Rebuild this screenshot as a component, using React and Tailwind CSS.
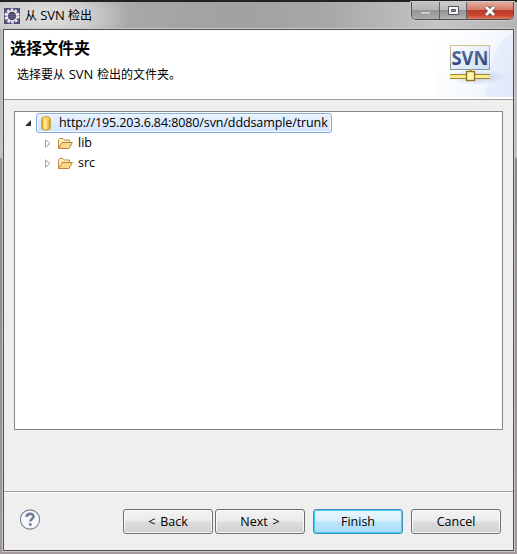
import React from "react";

const FONT = "font-['Open_Sans','Noto_Sans_CJK_SC',sans-serif]";

function AppIcon() {
  return (
    <svg width="16" height="16" viewBox="0 0 16 16" className="shrink-0">
      <rect width="16" height="16" fill="#57507f" />
      <circle cx="8" cy="8" r="6.4" fill="none" stroke="#f1eef2" strokeWidth="2.2" strokeDasharray="2.5 1.52" />
      <circle cx="8" cy="8" r="5" fill="#48446c" stroke="#f1eef2" strokeWidth="1.5" />
      <path d="M4 6.5h8M3.8 8.2h8.4M4.2 9.9h7.6" stroke="#77779a" strokeWidth=".7" />
    </svg>
  );
}

function SvnBanner() {
  return (
    <svg width="76" height="67" viewBox="0 0 76 67" className="shrink-0">
      <defs>
        <linearGradient id="bg" x1="0" x2="1" y1="0" y2=".4">
          <stop offset="0" stopColor="#fff" />
          <stop offset=".5" stopColor="#f9fbfe" />
          <stop offset="1" stopColor="#edf2fc" />
        </linearGradient>
        <linearGradient id="corner" x1="0" x2="1" y1="0" y2="1">
          <stop offset="0" stopColor="#edf2fc" />
          <stop offset="1" stopColor="#dbe5f8" />
        </linearGradient>
        <linearGradient id="frame" x1="0" x2="0" y1="0" y2="1">
          <stop offset="0" stopColor="#d6c08d" />
          <stop offset="1" stopColor="#7d9a9c" />
        </linearGradient>
        <linearGradient id="fill" x1="0" x2="1" y1="0" y2="1">
          <stop offset="0" stopColor="#fff" />
          <stop offset="1" stopColor="#cfddf4" />
        </linearGradient>
        <linearGradient id="word" x1="0" x2="0" y1="0" y2="1">
          <stop offset="0" stopColor="#6a7ea5" />
          <stop offset="1" stopColor="#1f3573" />
        </linearGradient>
        <radialGradient id="shade">
          <stop offset="0" stopColor="#9aa9ca" stopOpacity=".75" />
          <stop offset="1" stopColor="#c9d5ec" stopOpacity="0" />
        </radialGradient>
      </defs>
      <rect width="76" height="67" fill="url(#bg)" />
      <path d="M76 2C64 9 57 20 54 36L48 67H76Z" fill="url(#corner)" opacity=".8" />
      <ellipse cx="40" cy="47" rx="31" ry="8" fill="url(#shade)" />
      <rect x="13.5" y="15.5" width="39" height="24" fill="url(#fill)" stroke="url(#frame)" />
      <text x="14.5" y="35" textLength="37" lengthAdjust="spacingAndGlyphs" fontSize="19.5" fontWeight="700" fill="url(#word)" className="font-['Open_Sans',sans-serif]">SVN</text>
      <path d="M33.5 39v4" stroke="#c3a63e" strokeWidth="3" />
      <path d="M13 44.5h40M13 48.5h40" stroke="#a08936" />
      <path d="M13 46.5h40" stroke="#f9ec87" strokeWidth="3" />
      <rect x="29.5" y="41.5" width="8" height="9" fill="#fff6b8" stroke="#8e7622" strokeWidth="1.4" />
    </svg>
  );
}

function Folder() {
  return (
    <svg width="16" height="14" viewBox="0 0 16 14" className="shrink-0">
      <path d="M1.5 12.5V3.5L2.5 2.5H6L7.2 4H12.5V6" fill="#fdf0bd" stroke="#c08b45" />
      <path d="M1.5 12.5L5 6.5H15.3L12 12.5Z" fill="#fbd98c" stroke="#bf8239" strokeLinejoin="round" />
    </svg>
  );
}

function Database() {
  return (
    <svg width="10" height="15" viewBox="0 0 10 15" className="shrink-0">
      <defs>
        <linearGradient id="db">
          <stop offset="0" stopColor="#e5a51e" />
          <stop offset=".4" stopColor="#fff3a0" />
          <stop offset="1" stopColor="#dc9b16" />
        </linearGradient>
      </defs>
      <path d="M.8 2.5C.8.2 9.2.2 9.2 2.5V12.3C9.2 14.6.8 14.6.8 12.3Z" fill="url(#db)" stroke="#c58d20" />
      <ellipse cx="5" cy="2.6" rx="3.6" ry="1.2" fill="#fbdc68" />
    </svg>
  );
}

function TreeItem({ label }) {
  return (
    <div className="flex h-5 items-center pl-[30px]">
      <svg width="6" height="9" viewBox="0 0 6 9" className="shrink-0">
        <path d="M.5.8V8.2L5 4.5Z" fill="#fff" stroke="#a0a0a0" />
      </svg>
      <span className="ml-[6px] flex"><Folder /></span>
      <span className="ml-[5px] text-[12.5px] leading-5">{label}</span>
    </div>
  );
}

function Button({ children, primary = false, className = "" }) {
  const look = primary
    ? "border-[#3c8fb5] bg-[linear-gradient(#e9f6fd_0%,#d9f0fc_48%,#bce5fc_52%,#a9dbf5_100%)] shadow-[inset_0_0_0_1px_#48d0f5]"
    : "border-[#707070] bg-[linear-gradient(#f3f3f3_0%,#ebebeb_48%,#dddddd_52%,#cfcfcf_100%)] shadow-[inset_0_0_0_1px_#f8f8f8]";
  return (
    <button className={`flex h-[25px] w-[90px] items-center justify-center rounded-[3px] border pt-px text-[12.5px] leading-none [word-spacing:1.5px] ${look} ${className}`}>
      {children}
    </button>
  );
}

function WindowControls() {
  return (
    <div className="mr-[3px] flex h-[18px] w-[103px] self-start overflow-hidden rounded-b-[5px] border border-t-0 border-[#4e4e4e] shadow-[0_0_0_1px_#c9c9c9]">
      <div className="flex w-[28px] items-center justify-center border-r border-[#626262] bg-[linear-gradient(#c4c4c4_0%,#b4b4b4_45%,#959595_50%,#aaaaaa_100%)]">
        <span className="mt-[5px] h-[4px] w-[11px] border border-[#999] bg-[#cacaca]" />
      </div>
      <div className="flex w-[27px] items-center justify-center border-r border-[#626262] bg-[linear-gradient(#cecece_0%,#bbbbbb_45%,#929292_50%,#b4b4b4_100%)]">
        <svg width="13" height="11" viewBox="0 0 13 11">
          <path fillRule="evenodd" d="M1.5 1.5H11.5V9.5H1.5ZM4.5 4.5V6.5H8.5V4.5Z" fill="#f8f8f8" stroke="#51545f" />
        </svg>
      </div>
      <div className="flex flex-1 items-center justify-center bg-[linear-gradient(#e3aca0_0%,#d67c6c_45%,#bb3a2a_50%,#cb4632_78%,#df7960_100%)]">
        <svg width="14" height="12" viewBox="0 0 14 12">
          <path d="M3 2L11 10M11 2L3 10" stroke="#5d4a4c" strokeWidth="4.4" />
          <path d="M3 2L11 10M11 2L3 10" stroke="#fff" strokeWidth="2.7" />
        </svg>
      </div>
    </div>
  );
}

export default function App() {
  return (
    <div className={`flex h-[554px] w-[517px] flex-col overflow-hidden bg-[linear-gradient(#b5b5b5_0,#c2c0c0_157px,#8b8889_159px,#989495_420px,#a5989c_554px)] text-black ${FONT}`}>
      <header className="flex h-[29px] shrink-0 items-center border-t-2 border-[#222] bg-[radial-gradient(ellipse_85px_34px_at_45px_14px,#dedede_0%,#d0d0d0_50%,transparent_100%),linear-gradient(90deg,#b8b8b8_0,#a6a6a6_150px,#a1a1a1_240px,#a8a8a8_330px,#c5c5c5_440px,#b4b4b4_517px)] pl-1">
        <AppIcon />
        <h1 className="ml-[5px] flex-1 whitespace-nowrap text-[12px] leading-5">
          从 <span className="text-[13px]">SVN</span> 检出
        </h1>
        <WindowControls />
      </header>

      <main className="mr-[3px] ml-[3px] flex h-[522px] shrink-0 flex-col border border-[#56504f] bg-[#efefef] shadow-[0_0_0_1px_#c9c6c7]">
        <section className="flex h-[70px] shrink-0 justify-between border-b border-[#a0a0a0] bg-white">
          <div className="whitespace-nowrap">
            <h2 className="mt-[7px] ml-[6px] text-[16px] leading-[22px] font-bold">选择文件夹</h2>
            <p className="mt-[5px] ml-[13px] text-[12px] leading-[20px] [word-spacing:.5px]">
              选择要从 <span className="text-[13px]">SVN</span> 检出的文件夹。
            </p>
          </div>
          <SvnBanner />
        </section>

        <section className="mx-[10px] mt-[11px] h-[319px] shrink-0 border border-[#828790] bg-white">
          <div className="flex h-[21px] items-center pt-px pl-[10px]">
            <svg width="6" height="6" viewBox="0 0 6 6" className="shrink-0">
              <path d="M0 6H6V0Z" fill="#333" />
            </svg>
            <div className="ml-[5px] flex h-[20px] w-[296px] items-center rounded-[3px] border border-[#84acdd] bg-[linear-gradient(#eaf3fe,#d0e4fc)] pl-[4px] shadow-[inset_0_0_0_1px_#f0f7ff]">
              <Database />
              <span className="ml-[8px] pb-px text-[12.5px] leading-[17px] tracking-[-0.1px] whitespace-nowrap">http://195.203.6.84:8080/svn/dddsample/trunk</span>
            </div>
          </div>
          <TreeItem label="lib" />
          <TreeItem label="src" />
        </section>

        <footer className="mt-auto flex h-[59px] shrink-0 items-start border-t border-[#a0a0a0] pt-[17px] pl-[16px] shadow-[inset_0_1px_0_#fff]">
          <svg width="21" height="21" viewBox="0 0 21 21" className="shrink-0">
            <circle cx="10" cy="10.5" r="9.6" fill="#f8f8fb" stroke="#77839d" strokeWidth="1.1" />
            <path d="M6.7 8C6.7 3.9 13.5 3.8 13.5 7.6C13.5 10 10.3 10 10.3 12.6" fill="none" stroke="#75819c" strokeWidth="2.7" />
            <rect x="8.9" y="14.2" width="2.8" height="2.6" fill="#75819c" />
          </svg>
          <Button className="ml-[82px]">&lt; Back</Button>
          <Button className="ml-[2px]">Next &gt;</Button>
          <Button primary className="ml-[8px]">Finish</Button>
          <Button className="ml-[8px]">Cancel</Button>
        </footer>
      </main>
    </div>
  );
}
